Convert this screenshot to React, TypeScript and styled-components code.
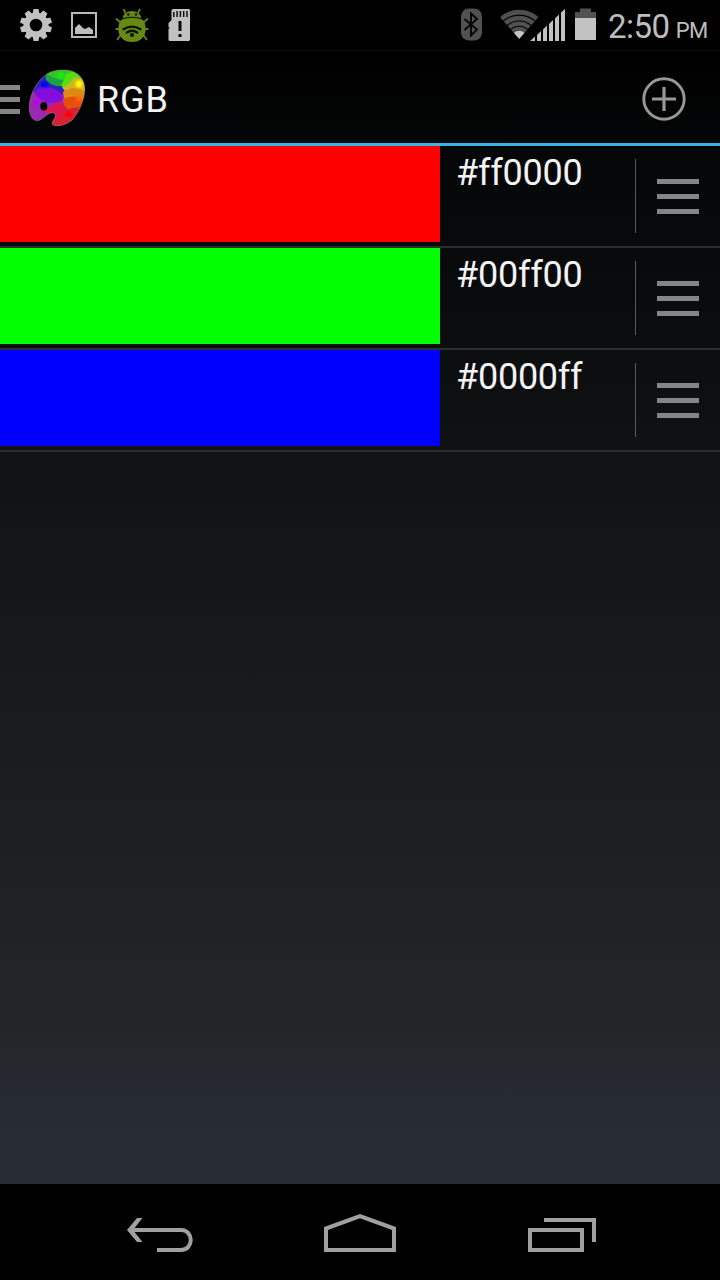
import React from "react";
import styled, { createGlobalStyle } from "styled-components";

const GlobalStyle = createGlobalStyle`
  body { margin: 0; background: #000; }
  * { box-sizing: border-box; }
  svg { display: block; flex: none; }
`;

const Screen = styled.div`
  width: 720px;
  height: 1280px;
  display: flex;
  flex-direction: column;
  overflow: hidden;
  color: #f3f3f3;
  font-family: Roboto, "Liberation Sans", sans-serif;
  background: linear-gradient(#000 0, #000 50px, #050607 146px, #0a0b0d 300px, #101214 460px, #1a1d1f 760px, #23272a 1040px, #272b33 1110px, #282c35 1184px);
`;

const StatusBar = styled.header`
  height: 50px;
  display: flex;
  align-items: flex-start;
  background: #000;
  color: #bebebe;
`;

const Gap = styled.span<{ $w: number }>`
  flex: none;
  width: ${(p) => p.$w}px;
`;

const Clock = styled.time`
  display: flex;
  align-items: baseline;
  white-space: pre;
  font-size: 33px;
  line-height: 38px;
  padding-top: 8px;
  letter-spacing: -0.5px;
`;

const Meridiem = styled.span`
  font-size: 22px;
  margin-left: 6px;
  letter-spacing: -0.5px;
`;

const ActionBar = styled.nav`
  height: 96px;
  display: flex;
  align-items: center;
  padding-top: 2px;
  border-top: 1px solid #0d0d0d;
  border-bottom: 3px solid #33b5e5;
`;

const MenuSlot = styled.span`
  padding-top: 2px;
`;

const Title = styled.h1`
  flex: 1;
  margin: 0;
  padding-left: 10px;
  font-size: 36px;
  font-weight: 400;
  line-height: 42px;
  padding-top: 3px;
  letter-spacing: 0.9px;
`;

const AddButton = styled.button`
  width: 112px;
  height: 90px;
  padding: 1px 0 0;
  border: 0;
  background: none;
  display: flex;
  align-items: center;
  justify-content: center;
`;

const Bars = styled.span<{ $w: number; $gap: number; $h: number }>`
  display: grid;
  flex: none;
  gap: ${(p) => p.$gap}px;
  width: ${(p) => p.$w}px;
  i { height: ${(p) => p.$h}px; background: #858585; }
`;

const List = styled.main`
  flex: 1;
`;

const Row = styled.section`
  height: 102px;
  display: flex;
  border-bottom: 2px solid #2b2d2e;
`;

const Swatch = styled.div<{ $color: string }>`
  width: 440px;
  height: 96px;
  background: ${(p) => p.$color};
`;

const HexCode = styled.span`
  width: 195px;
  padding: 6px 0 0 16px;
  font-size: 36px;
  line-height: 42px;
  letter-spacing: -0.25px;
`;

const Handle = styled.div`
  height: 74px;
  margin-top: 13px;
  padding-left: 20.5px;
  border-left: 1px solid #58595a;
  display: flex;
  align-items: center;
`;

const NavBar = styled.footer`
  height: 96px;
  padding: 24px 122px 0 124px;
  display: flex;
  justify-content: space-between;
  background: #000;
`;

const GearIcon = () => (
  <svg width="34" height="34" viewBox="-17 -17 34 34">
    <g fill="#c1c1c1">
      {Array.from({ length: 10 }, (_, i) => (
        <path key={i} d="M-3.4-11L-2.5-16H2.5L3.4-11Z" transform={`rotate(${i * 36})`} />
      ))}
    </g>
    <circle r="9.4" fill="none" stroke="#c1c1c1" strokeWidth="6.2" />
  </svg>
);

const PictureIcon = () => (
  <svg width="26" height="26" viewBox="0 0 26 26">
    <path d="M1 1H25V25H1Z" fill="none" stroke="#b8b8b8" strokeWidth="2" />
    <path d="M4 22V16L6 14L8 12L10 14L12 16L14 17L18 15L22 18V22Z" fill="#bdbdbd" />
  </svg>
);

const BugIcon = () => (
  <svg width="34" height="36" viewBox="115 7 34 36">
    <g fill="none" stroke="#607f12" strokeWidth="1.8">
      <path d="M125.5 13L123.5 9M138 13L140 9M121 23L116 18.5M143 23L148 18.5M119 29H115.500M145 29H148.500M121 34.5L117 40M143 34.5L147 40" />
    </g>
    <path d="M122.500 19.500C122.500 8 141 8 141.500 19.500Z" fill="#668814" />
    <path d="M121 20C115.500 28 118 42 132 42S148.500 28 143 20C139 17.500 125 17.500 121 20Z" fill="#668814" />
    <path d="M122 18.800Q132 16 142 18.800" fill="none" stroke="#1b2504" strokeWidth="1.400" />
    <circle cx="128.300" cy="14.500" r="1.300" fill="#101602" />
    <circle cx="136" cy="14.500" r="1.300" fill="#101602" />
    <path d="M123.500 29.200Q132 24 140.500 29.200M126.800 32.500Q132 29 137.200 32.500" fill="none" stroke="#0d1102" strokeWidth="2.300" strokeLinecap="round" />
    <circle cx="132" cy="35" r="2" fill="#0d1102" />
  </svg>
);

const SdCardIcon = () => (
  <svg width="23" height="33" viewBox="168 9 23 33">
    <path d="M173 9H189L190 10V40L189 41H169.500L168.500 40V29L170 27.500H168.500V23L171.500 20V10Z" fill="#c1c1c1" />
    <path d="M173.800 12V17M177.100 11V17M180.400 11V17M183.700 11V17M187 11V17" stroke="#111" strokeWidth="1.500" />
    <path d="M178.500 21H181.500V31H178.500ZM178.500 34H181.500V37H178.500Z" fill="#080808" />
  </svg>
);

const BluetoothIcon = () => (
  <svg width="22" height="33" viewBox="461 8 22 33">
    <rect x="461" y="8.500" width="21" height="32" rx="8" fill="#515151" />
    <path d="M464.500 19L477 29.500L471 35.500V13.500L477 19L464.500 30" fill="none" stroke="#050505" strokeWidth="1.900" />
  </svg>
);

const WifiIcon = () => (
  <svg width="40" height="31" viewBox="498.500 9 40 31">
    <defs>
      <clipPath id="wifi-fan"><path d="M518.700 39L495.500 12.500V5H542V12.500Z" /></clipPath>
    </defs>
    <g clipPath="url(#wifi-fan)" fill="none" stroke="#505050">
      <circle cx="518.700" cy="39" r="26.800" strokeWidth="4.800" />
      <circle cx="518.700" cy="39" r="20.900" strokeWidth="4.600" />
      <circle cx="518.700" cy="39" r="15.400" strokeWidth="4.200" />
      <circle cx="518.700" cy="39" r="10.300" strokeWidth="4" />
      <circle cx="518.700" cy="39" r="8.200" fill="#c5c5c5" stroke="none" />
    </g>
  </svg>
);

const SignalIcon = () => (
  <svg width="36" height="33" viewBox="530 9 36 33">
    <path
      d="M530 41L535 36.500V41ZM537 41V35L541 31V41ZM543 41V29.500L547 25.500V41ZM549 41V24L553 20V41ZM555 41V18.500L559 14.500V41ZM561 41V12.500L565 9V41Z"
      fill="#c2c2c2"
    />
  </svg>
);

const BatteryIcon = () => (
  <svg width="21" height="32" viewBox="575 8 21 32">
    <path d="M575 18V12H580V8.500H591V12H596V18Z" fill="#515151" />
    <path d="M575 18H596V40H575Z" fill="#c2c2c2" />
  </svg>
);

const PaletteIcon = () => (
  <svg width="60" height="60" viewBox="27 68 60 60">
    <defs>
      <clipPath id="palette">
        <path d="M63 70C73 69.500 83 75 84.500 86C86 97 79 113 72 120C66 125 58 127 53 125C50.500 123 54.500 119 55.300 117C56.500 113 53 112 49.500 113.500C44 116 41 121.500 36 120.500C30 119 28.500 110 29.500 103C31 92 38 80 47 74C52 71 57 70 63 70Z" />
      </clipPath>
      <filter id="soft" x="-20%" y="-20%" width="140%" height="140%"><feGaussianBlur stdDeviation="0.7" /></filter>
      <filter id="glow" x="-60%" y="-60%" width="220%" height="220%"><feGaussianBlur stdDeviation="1" /></filter>
    </defs>
    <g clipPath="url(#palette)">
      <path d="M27 68H87V128H27Z" fill="#9a28b4" />
      <g filter="url(#soft)">
        <ellipse cx="49" cy="87" rx="16" ry="12" fill="#2728bd" />
        <path d="M45 68H70L66 81L62 86Q52 87 46 80Z" fill="#1ca342" />
        <path d="M50 66H78L72 79Q61 83 47 74Z" fill="#35c51f" />
        <path d="M66 74L78 70L84 84L70 90L61 86Z" fill="#50e016" />
        <path d="M62 87Q70 85 74 77L90 80V97H69Z" fill="#ceb624" />
        <path d="M63 92Q75 84 87 93V106H66Z" fill="#df8818" />
        <path d="M63 99Q76 93 84 101L81 112L64 108Z" fill="#e6500f" />
        <ellipse cx="49" cy="95" rx="14" ry="7.500" fill="#8310df" transform="rotate(14 49 95)" />
        <path d="M59 101L68 109L80 107L70 130H48L54 113L43 112Z" fill="#d82032" />
        <path d="M58 102Q68 105 65 112L56 121L54 113L44 111Z" fill="#dc1550" />
      </g>
      <g filter="url(#glow)">
        <circle cx="60.500" cy="75.500" r="3" fill="#00f818" />
        <ellipse cx="44.500" cy="84.500" rx="4" ry="3" fill="#0404ff" />
        <circle cx="79" cy="84" r="3.500" fill="#ffff00" />
        <circle cx="79" cy="98.500" r="3" fill="#ff6a00" />
        <circle cx="37" cy="102" r="3.200" fill="#c000f0" />
        <ellipse cx="68.500" cy="114.500" rx="4" ry="3" fill="#ff0008" />
      </g>
      <ellipse cx="43.800" cy="106.300" rx="3.500" ry="4.200" fill="#020303" />
    </g>
    <path d="M63 70C73 69.500 83 75 84.500 86C86 97 79 113 72 120C66 125 58 127 53 125C50.500 123 54.500 119 55.300 117C56.500 113 53 112 49.500 113.500C44 116 41 121.500 36 120.500C30 119 28.500 110 29.500 103C31 92 38 80 47 74C52 71 57 70 63 70Z" fill="none" stroke="#a38b75" strokeOpacity="0.55" strokeWidth="0.9" />
  </svg>
);

const AddIcon = () => (
  <svg width="44" height="44" viewBox="-22 -22 44 44">
    <circle r="20.200" fill="none" stroke="#989898" strokeWidth="2.900" />
    <path d="M-12 0H12M0-12V12" stroke="#989898" strokeWidth="3.200" />
  </svg>
);

const BackIcon = () => (
  <svg width="72" height="48" viewBox="124 1208 72 48">
    <path d="M157 1250H181C194 1250 194 1230 181 1230H131" fill="none" stroke="#a0a0a0" strokeWidth="4" />
    <path d="M127 1230L137 1218H142.500L133 1230L142.500 1242H137Z" fill="#a0a0a0" />
  </svg>
);

const HomeIcon = () => (
  <svg width="76" height="48" viewBox="323 1208 76 48">
    <path d="M326 1250V1228.500L360 1216.200L394 1228.500V1250Z" fill="none" stroke="#a0a0a0" strokeWidth="4" />
  </svg>
);

const RecentsIcon = () => (
  <svg width="72" height="48" viewBox="526 1208 72 48">
    <path d="M530 1230H582V1250H530ZM544 1220H594V1242" fill="none" stroke="#a0a0a0" strokeWidth="4" />
  </svg>
);

const StatusSlot = styled.span<{ $top: number; $left: number }>`
  flex: none;
  margin: ${(p) => p.$top}px 0 0 ${(p) => p.$left}px;
`;

const colors = ["#ff0000", "#00ff00", "#0000ff"];

export default function App() {
  return (
    <>
      <GlobalStyle />
      <Screen>
        <StatusBar>
          <StatusSlot $top={8} $left={19}><GearIcon /></StatusSlot>
          <StatusSlot $top={12} $left={18}><PictureIcon /></StatusSlot>
          <StatusSlot $top={7} $left={18}><BugIcon /></StatusSlot>
          <StatusSlot $top={9} $left={19}><SdCardIcon /></StatusSlot>
          <StatusSlot $top={8} $left={270}><BluetoothIcon /></StatusSlot>
          <StatusSlot $top={9} $left={15.5}><WifiIcon /></StatusSlot>
          <StatusSlot $top={9} $left={-8.5}><SignalIcon /></StatusSlot>
          <StatusSlot $top={8} $left={9}><BatteryIcon /></StatusSlot>
          <Gap $w={12} />
          <Clock>2:50<Meridiem>PM</Meridiem></Clock>
        </StatusBar>
        <ActionBar>
          <MenuSlot>
            <Bars $w={20} $gap={7} $h={5}><i /><i /><i /></Bars>
          </MenuSlot>
          <Gap $w={7} />
          <PaletteIcon />
          <Title>RGB</Title>
          <AddButton aria-label="Add"><AddIcon /></AddButton>
        </ActionBar>
        <List>
          {colors.map((color) => (
            <Row key={color}>
              <Swatch $color={color} />
              <HexCode>{color}</HexCode>
              <Handle>
                <Bars $w={42} $gap={10} $h={5}><i /><i /><i /></Bars>
              </Handle>
            </Row>
          ))}
        </List>
        <NavBar>
          <BackIcon />
          <HomeIcon />
          <RecentsIcon />
        </NavBar>
      </Screen>
    </>
  );
}
